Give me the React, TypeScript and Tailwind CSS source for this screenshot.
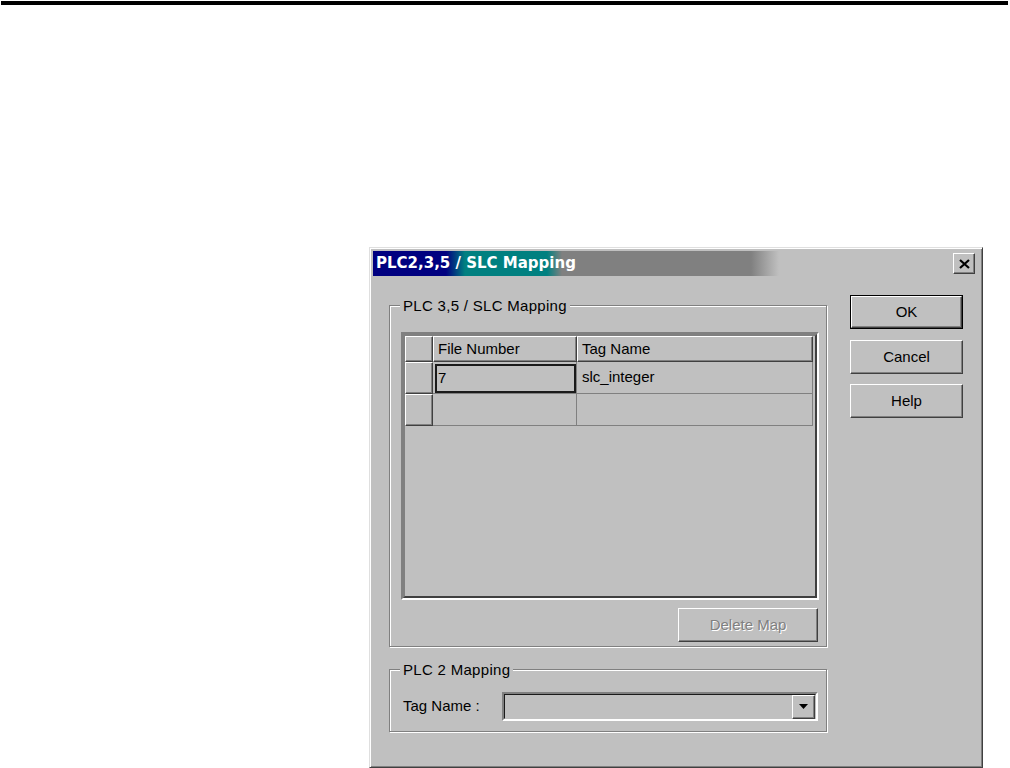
import React from "react";

const raised =
  "bg-[#c0c0c0] border-t border-l border-t-white border-l-white border-r border-b border-r-[#404040] border-b-[#404040] shadow-[inset_-1px_-1px_0_#808080]";

function GroupBox({
  label,
  className,
  children,
}: {
  label: string;
  className: string;
  children: React.ReactNode;
}) {
  return (
    <div
      className={`relative w-[438px] border border-[#808080] shadow-[inset_1px_1px_0_#ffffff,1px_1px_0_#ffffff] ${className}`}
    >
      <div className="absolute left-[10px] -top-[9px] bg-[#c0c0c0] px-[3px] text-[15px] leading-[17px] tracking-[0.3px] text-black">
        {label}
      </div>
      {children}
    </div>
  );
}

function Btn({ label, def }: { label: string; def?: boolean }) {
  if (def) {
    return (
      <div className="w-[113px] h-[34px] border border-black">
        <div
          className={`w-full h-full ${raised} flex items-center justify-center text-[15px] text-black`}
        >
          {label}
        </div>
      </div>
    );
  }
  return (
    <div
      className={`w-[113px] h-[34px] ${raised} flex items-center justify-center text-[15px] text-black`}
    >
      {label}
    </div>
  );
}

export default function App() {
  return (
    <div className="w-[1010px] h-[768px] bg-white overflow-hidden font-['Liberation_Sans',Arial,sans-serif] text-black">
      <div className="pt-[1px] pl-[1px]">
        <div className="w-[1007px] h-[4px] bg-black" />
      </div>

      <div className="ml-[369px] mt-[242px] w-[614px] h-[521px] bg-[#c0c0c0] border border-t-[#dfdfdf] border-l-[#dfdfdf] border-r-[#404040] border-b-[#404040] shadow-[inset_1px_1px_0_#ffffff,inset_-1px_-1px_0_#808080] p-[3px]">
        {/* Title bar */}
        <div className="h-[25px] flex items-center justify-between bg-[linear-gradient(90deg,#000080_0px,#000080_73px,#008080_92px,#008080_174px,#808080_189px,#808080_378px,#c0c0c0_406px,#c0c0c0_100%)]">
          <div className="pl-[3px] text-white font-bold text-[15px] font-['DejaVu_Sans',sans-serif] leading-none whitespace-nowrap">
            PLC2,3,5 / SLC Mapping
          </div>
          <div
            className={`mr-[4px] w-[22px] h-[21px] ${raised} flex items-center justify-center`}
          >
            <svg width="11" height="10" viewBox="0 0 11 10">
              <path
                d="M1 1 L10 9 M10 1 L1 9"
                stroke="#000"
                strokeWidth="2.2"
                fill="none"
              />
            </svg>
          </div>
        </div>

        {/* Body */}
        <div className="flex pl-[16px] gap-[23px]">
          <div className="flex flex-col">
            <GroupBox label="PLC 3,5 / SLC Mapping" className="mt-[29px] h-[342px]">
              <div className="pl-[11px] pt-[26px] pr-[7px] pb-[4px] flex flex-col">
                {/* Grid */}
                <div className="w-[418px] h-[268px] border-2 border-t-[#808080] border-l-[#808080] border-r-white border-b-white">
                  <div className="h-full border-2 border-t-[#808080] border-l-[#808080] border-r-[#404040] border-b-[#404040] bg-[#c0c0c0] text-[15px]">
                    <div className="flex h-[26px]">
                      <div className={`w-[28px] ${raised}`} />
                      <div className={`w-[144px] ${raised} flex items-center pl-[4px]`}>
                        File Number
                      </div>
                      <div className={`w-[236px] ${raised} flex items-center pl-[4px]`}>
                        Tag Name
                      </div>
                    </div>
                    <div className="flex h-[32px]">
                      <div className={`w-[28px] ${raised}`} />
                      <div className="w-[144px] border-r border-b border-[#808080] pl-[2px] pt-[2px]">
                        <div className="h-full border-2 border-[#1a1a1a] flex items-center pl-[1px]">
                          7
                        </div>
                      </div>
                      <div className="w-[236px] border-r border-b border-[#808080] flex items-center pl-[5px]">
                        slc_integer
                      </div>
                    </div>
                    <div className="flex h-[32px]">
                      <div className={`w-[28px] ${raised}`} />
                      <div className="w-[144px] border-r border-b border-[#808080]" />
                      <div className="w-[236px] border-r border-b border-[#808080]" />
                    </div>
                  </div>
                </div>
                <div className="mt-[8px] flex justify-end pr-[1px]">
                  <div
                    className={`w-[140px] h-[34px] ${raised} flex items-center justify-center text-[15px] text-[#808080] [text-shadow:1px_1px_0_#ffffff]`}
                  >
                    Delete Map
                  </div>
                </div>
              </div>
            </GroupBox>

            <GroupBox label="PLC 2 Mapping" className="mt-[22px] h-[63px]">
              <div className="pl-[13px] pt-[22px] flex items-center">
                <div className="w-[99px] text-[15px]">Tag Name :</div>
                <div className="w-[316px] h-[29px] border-2 border-t-[#808080] border-l-[#808080] border-r-white border-b-[#ffffff]">
                  <div className="h-full border-t border-l border-t-[#1a1a1a] border-l-[#1a1a1a] border-r border-b border-r-[#c0c0c0] border-b-[#c0c0c0] bg-[#c0c0c0] flex justify-end items-center pr-0">
                    <div
                      className={`w-[23px] h-[24px] ${raised} flex items-center justify-center`}
                    >
                      <svg width="9" height="5" viewBox="0 0 9 5">
                        <path d="M0 0 H9 L4.5 5 Z" fill="#000" />
                      </svg>
                    </div>
                  </div>
                </div>
              </div>
            </GroupBox>
          </div>

          <div className="flex flex-col pt-[19px]">
            <Btn label="OK" def />
            <div className="mt-[11px]">
              <Btn label="Cancel" />
            </div>
            <div className="mt-[10px]">
              <Btn label="Help" />
            </div>
          </div>
        </div>
      </div>
    </div>
  );
}
